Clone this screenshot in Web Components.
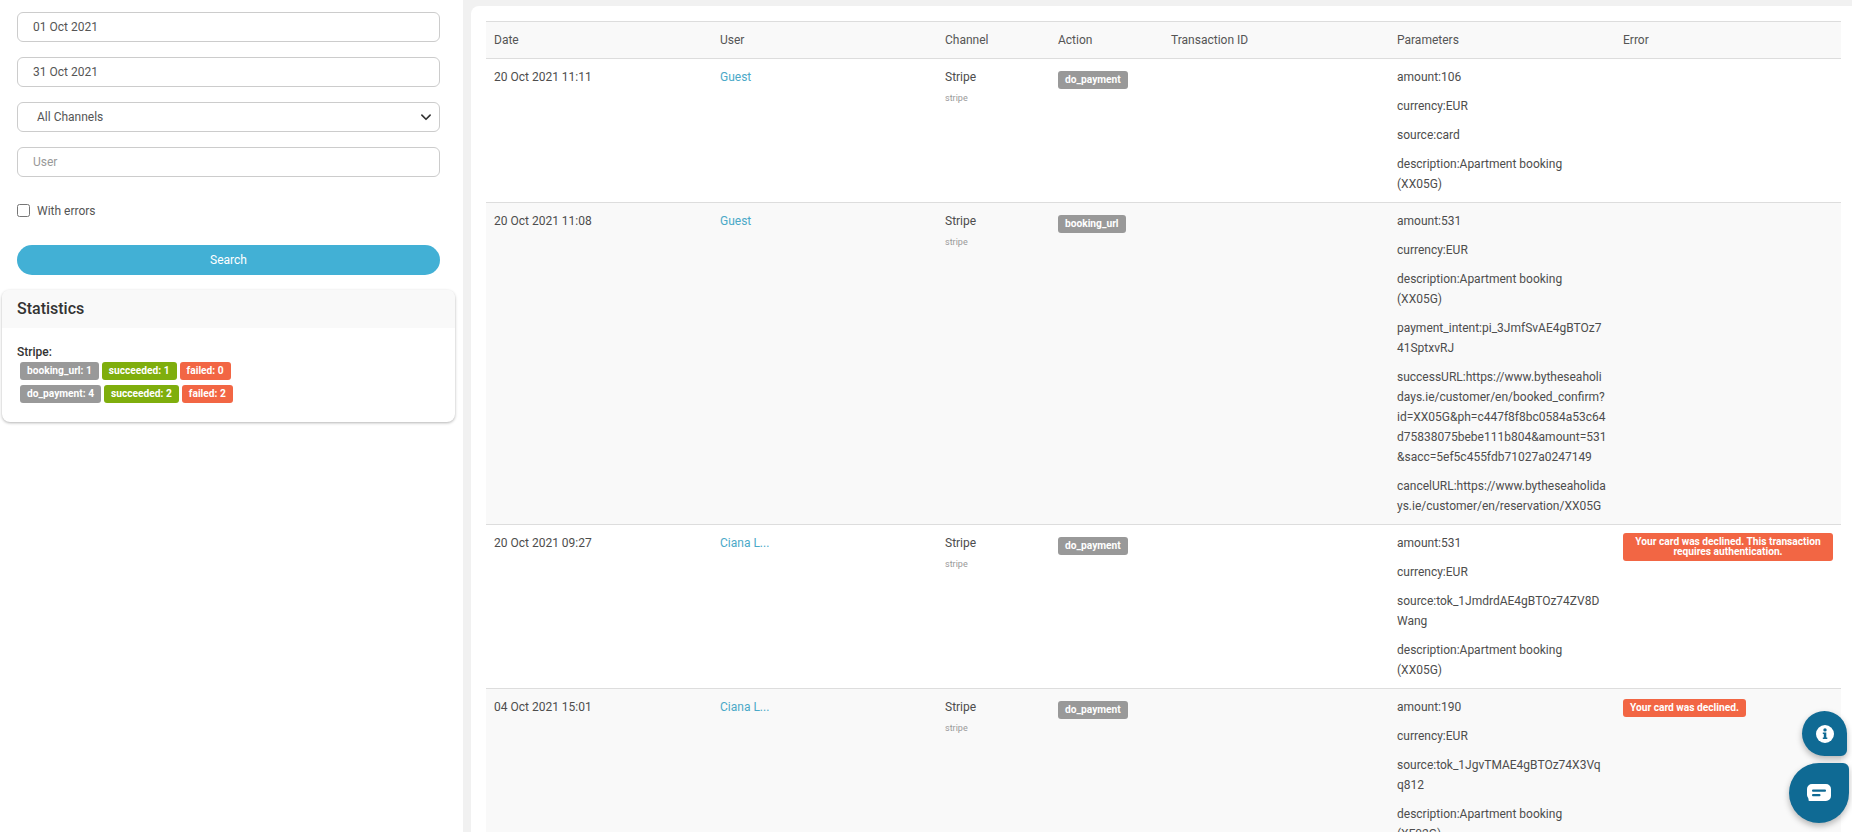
<!DOCTYPE html>
<html>
<head>
<meta charset="utf-8">
<title>Payment logs</title>
<style>
html, body { margin: 0; height: 100%; overflow: hidden; background: #fff; }
body { font: 12px/20px Roboto, "Liberation Sans", sans-serif; color: #4d4d4d; }
</style>
</head>
<body>
<log-page>
    <log-sidebar slot="side">
        <filter-field>01 Oct 2021</filter-field>
        <filter-field>31 Oct 2021</filter-field>
        <filter-select>All Channels</filter-select>
        <filter-field placeholder>User</filter-field>
        <filter-check>With errors</filter-check>
        <search-button>Search</search-button>
        <stats-card title="Statistics">
            <stats-line>
                <status-badge>booking_url: 1</status-badge>
                <status-badge type="ok">succeeded: 1</status-badge>
                <status-badge type="bad">failed: 0</status-badge>
            </stats-line>
            <stats-line>
                <status-badge>do_payment: 4</status-badge>
                <status-badge type="ok">succeeded: 2</status-badge>
                <status-badge type="bad">failed: 2</status-badge>
            </stats-line>
        </stats-card>
    </log-sidebar>
    <log-table>
        <log-row date="20 Oct 2021 11:11" user="Guest" action="do_payment">
            <param-line>amount:106</param-line>
            <param-line>currency:EUR</param-line>
            <param-line>source:card</param-line>
            <param-line>description:Apartment booking (XX05G)</param-line>
        </log-row>
        <log-row date="20 Oct 2021 11:08" user="Guest" action="booking_url" odd>
            <param-line>amount:531</param-line>
            <param-line>currency:EUR</param-line>
            <param-line>description:Apartment booking (XX05G)</param-line>
            <param-line>payment_intent:pi_3JmfSvAE4gBTOz741SptxvRJ</param-line>
            <param-line>successURL:https://www.bytheseaholidays.ie/customer/en/booked_confirm?id=XX05G&amp;ph=c447f8f8bc0584a53c64d75838075bebe111b804&amp;amount=531&amp;sacc=5ef5c455fdb71027a0247149</param-line>
            <param-line>cancelURL:https://www.bytheseaholidays.ie/customer/en/reservation/XX05G</param-line>
        </log-row>
        <log-row date="20 Oct 2021 09:27" user="Ciana L..." action="do_payment" error="Your card was declined. This transaction requires authentication.">
            <param-line>amount:531</param-line>
            <param-line>currency:EUR</param-line>
            <param-line>source:tok_1JmdrdAE4gBTOz74ZV8DWang</param-line>
            <param-line>description:Apartment booking (XX05G)</param-line>
        </log-row>
        <log-row date="04 Oct 2021 15:01" user="Ciana L..." action="do_payment" error="Your card was declined." odd>
            <param-line>amount:190</param-line>
            <param-line>currency:EUR</param-line>
            <param-line>source:tok_1JgvTMAE4gBTOz74X3Vqq812</param-line>
            <param-line>description:Apartment booking (XF02G)</param-line>
        </log-row>
    </log-table>
</log-page>
<float-button kind="info"></float-button>
<float-button kind="chat"></float-button>

<script>
const COLS = '226px 225px 113px 113px 226px 226px 226px';

class LogPage extends HTMLElement {
    constructor() {
        super();
        this.attachShadow({ mode: "open" });
        this.shadowRoot.innerHTML = `
            <style>
            :host { display: flex; height: 832px; background: #f1f1f1; overflow: hidden; }
            .side { flex: 0 0 463px; background: #fff; }
            .main {
                flex: 1;
                margin: 6px 0 0 8px;
                padding: 15px 11px 0 15px;
                background: #fff;
                border-radius: 8px 0 0 0;
                min-width: 0;
            }
            </style>
            <div class="side"><slot name="side"></slot></div>
            <div class="main"><slot></slot></div>
        `;
    }
}

class LogSidebar extends HTMLElement {
    constructor() {
        super();
        this.attachShadow({ mode: "open" });
        this.shadowRoot.innerHTML = `
            <style>
            :host { display: flex; flex-direction: column; padding-top: 12px; }
            </style>
            <slot></slot>
        `;
    }
}

class FilterField extends HTMLElement {
    constructor() {
        super();
        this.attachShadow({ mode: "open" });
        this.shadowRoot.innerHTML = `
            <style>
            :host {
                display: block;
                height: 30px;
                box-sizing: border-box;
                margin: 0 23px 15px 17px;
                padding: 0 15px;
                border: 1px solid #ccc;
                border-radius: 6px;
                line-height: 28px;
                color: #555;
            }
            :host([placeholder]) { color: #999; }
            </style>
            <slot></slot>
        `;
    }
}

class FilterSelect extends HTMLElement {
    constructor() {
        super();
        this.attachShadow({ mode: "open" });
        this.shadowRoot.innerHTML = `
            <style>
            :host {
                display: flex;
                align-items: center;
                justify-content: space-between;
                height: 30px;
                box-sizing: border-box;
                margin: 0 23px 15px 17px;
                padding: 0 7px 0 19px;
                border: 1px solid #ccc;
                border-radius: 6px;
                color: #555;
            }
            svg { display: block; }
            </style>
            <slot></slot>
            <svg width="12" height="12" viewBox="0 0 16 16"><path d="M2.500 5.500L8 11l5.500-5.500" fill="none" stroke="#333" stroke-width="2.200" stroke-linecap="round" stroke-linejoin="round"/></svg>
        `;
    }
}

class FilterCheck extends HTMLElement {
    constructor() {
        super();
        this.attachShadow({ mode: "open" });
        this.shadowRoot.innerHTML = `
            <style>
            :host {
                display: flex;
                align-items: center;
                gap: 7px;
                margin: 12px 23px 28px 17px;
                height: 13px;
                color: #555;
            }
            i {
                width: 13px;
                height: 13px;
                box-sizing: border-box;
                border: 1px solid #767676;
                border-radius: 2.5px;
                background: #fff;
            }
            </style>
            <i></i><slot></slot>
        `;
    }
}

class SearchButton extends HTMLElement {
    constructor() {
        super();
        this.attachShadow({ mode: "open" });
        this.shadowRoot.innerHTML = `
            <style>
            :host {
                display: block;
                height: 30px;
                margin: 0 23px 15px 17px;
                border-radius: 15px;
                background: #42b0d5;
                color: #fff;
                text-align: center;
                line-height: 30px;
            }
            </style>
            <slot></slot>
        `;
    }
}

class StatsCard extends HTMLElement {
    constructor() {
        super();
        this.attachShadow({ mode: "open" });
        this.shadowRoot.innerHTML = `
            <style>
            :host {
                display: block;
                height: 132px;
                margin: 0 8px 0 2px;
                border-radius: 8px;
                background: #fff;
                box-shadow: 0 1px 3px rgba(0,0,0,.3);
                overflow: hidden;
            }
            .head {
                height: 38px;
                padding-left: 15px;
                background: #f9f9f9;
                font-size: 16px;
                font-weight: 500;
                line-height: 37px;
                color: #333;
            }
            .body { padding: 14px 15px 0; }
            .name { font-weight: 500; color: #333; }
            </style>
            <div class="head"></div>
            <div class="body">
                <div class="name">Stripe:</div>
                <slot></slot>
            </div>
        `;
    }

    connectedCallback() {
        this.shadowRoot.querySelector('.head').textContent = this.getAttribute('title');
    }
}

class StatsLine extends HTMLElement {
    constructor() {
        super();
        this.attachShadow({ mode: "open" });
        this.shadowRoot.innerHTML = `
            <style>
            :host { display: flex; gap: 3px; padding-left: 3px; margin-bottom: 5px; }
            </style>
            <slot></slot>
        `;
    }
}

class StatusBadge extends HTMLElement {
    constructor() {
        super();
        this.attachShadow({ mode: "open" });
        this.shadowRoot.innerHTML = `
            <style>
            :host {
                display: inline-block;
                box-sizing: border-box;
                padding: 4px 7px;
                border-radius: 3px;
                background: #999;
                color: #fff;
                font-size: 10.2px;
                font-weight: 700;
                line-height: 10px;
                text-align: center;
            }
            :host([type="ok"]) { background: #7fae0d; }
            :host([type="bad"]) { background: #f26644; }
            </style>
            <slot></slot>
        `;
    }
}

class LogTable extends HTMLElement {
    constructor() {
        super();
        this.attachShadow({ mode: "open" });
        this.shadowRoot.innerHTML = `
            <style>
            :host { display: block; border-top: 1px solid #ddd; }
            .head {
                display: grid;
                grid-template-columns: ${COLS};
                height: 36px;
                background: #f9f9f9;
                line-height: 37px;
                color: #555;
            }
            .head div { padding-left: 8px; }
            </style>
            <div class="head">
                <div>Date</div><div>User</div><div>Channel</div><div>Action</div>
                <div>Transaction ID</div><div>Parameters</div><div>Error</div>
            </div>
            <slot></slot>
        `;
    }
}

class LogRow extends HTMLElement {
    constructor() {
        super();
        this.attachShadow({ mode: "open" });
        this.shadowRoot.innerHTML = `
            <style>
            :host {
                display: grid;
                grid-template-columns: ${COLS};
                padding: 8px 0;
                border-top: 1px solid #ddd;
                background: #fff;
            }
            :host([odd]) { background: #f9f9f9; }
            .cell { padding: 0 8px; min-width: 0; }
            .user { color: #4ba9c8; }
            .sub { margin-top: 5px; font-size: 9px; line-height: 12px; color: #999; }
            .pill { padding-top: 2px; }
            .params { display: flex; flex-direction: column; gap: 9px; overflow-wrap: break-word; }
            </style>
            <div class="cell date"></div>
            <div class="cell user"></div>
            <div class="cell">Stripe<div class="sub">stripe</div></div>
            <div class="cell pill"><status-badge class="action"></status-badge></div>
            <div class="cell"></div>
            <div class="cell params"><slot></slot></div>
            <div class="cell err"></div>
        `;
    }

    connectedCallback() {
        const root = this.shadowRoot;
        root.querySelector('.date').textContent = this.getAttribute('date');
        root.querySelector('.user').textContent = this.getAttribute('user');
        root.querySelector('.action').textContent = this.getAttribute('action');

        if (this.hasAttribute('error')) {
            const b = document.createElement('status-badge');
            b.setAttribute('type', 'bad');
            b.textContent = this.getAttribute('error');
            root.querySelector('.err').append(b);
        }
    }
}

class ParamLine extends HTMLElement {
    constructor() {
        super();
        this.attachShadow({ mode: "open" });
        this.shadowRoot.innerHTML = `
            <style>
            :host { display: block; min-width: 0; }
            </style>
            <slot></slot>
        `;
    }
}

class FloatButton extends HTMLElement {
    constructor() {
        super();
        this.attachShadow({ mode: "open" });
        this.shadowRoot.innerHTML = `
            <style>
            :host {
                position: fixed;
                display: flex;
                align-items: center;
                justify-content: center;
                background: #0f6a94;
                box-shadow: 0 3px 6px rgba(0,0,0,.28);
            }
            :host([kind="info"]) {
                right: 5px;
                bottom: 76px;
                width: 45px;
                height: 45px;
                border-radius: 50% 50% 6px 50%;
            }
            :host([kind="chat"]) {
                right: 3px;
                bottom: 9px;
                width: 60px;
                height: 60px;
                border-radius: 50% 6px 50% 50%;
            }
            </style>
            <span class="icon"></span>
        `;
    }

    connectedCallback() {
        const icons = {
            info: `<svg width="18" height="18" viewBox="0 0 18 18" style="display:block"><circle cx="9" cy="9" r="9" fill="#fff"/><circle cx="9" cy="4.900" r="1.700" fill="#0f6a94"/><path d="M6.800 7.400h3.500v5h1v1.600H6.800v-1.600h1v-3.400h-1z" fill="#0f6a94"/></svg>`,
            chat: `<svg width="24" height="18" viewBox="0 0 24 18" style="display:block"><path d="M5 0h14a5 5 0 0 1 5 5v7a5 5 0 0 1-5 5H2.500a1 1 0 0 1-.9-1.500L1.200 14A5 5 0 0 1 0 11V5a5 5 0 0 1 5-5z" fill="#fff"/><rect x="5" y="5.500" width="14" height="2.200" rx="1" fill="#0f6a94"/><rect x="5" y="10" width="8.500" height="2.200" rx="1" fill="#0f6a94"/></svg>`
        };
        this.shadowRoot.querySelector('.icon').innerHTML = icons[this.getAttribute('kind')];
    }
}

customElements.define('log-page', LogPage);
customElements.define('log-sidebar', LogSidebar);
customElements.define('filter-field', FilterField);
customElements.define('filter-select', FilterSelect);
customElements.define('filter-check', FilterCheck);
customElements.define('search-button', SearchButton);
customElements.define('stats-card', StatsCard);
customElements.define('stats-line', StatsLine);
customElements.define('status-badge', StatusBadge);
customElements.define('log-table', LogTable);
customElements.define('log-row', LogRow);
customElements.define('param-line', ParamLine);
customElements.define('float-button', FloatButton);
</script>
</body>
</html>
